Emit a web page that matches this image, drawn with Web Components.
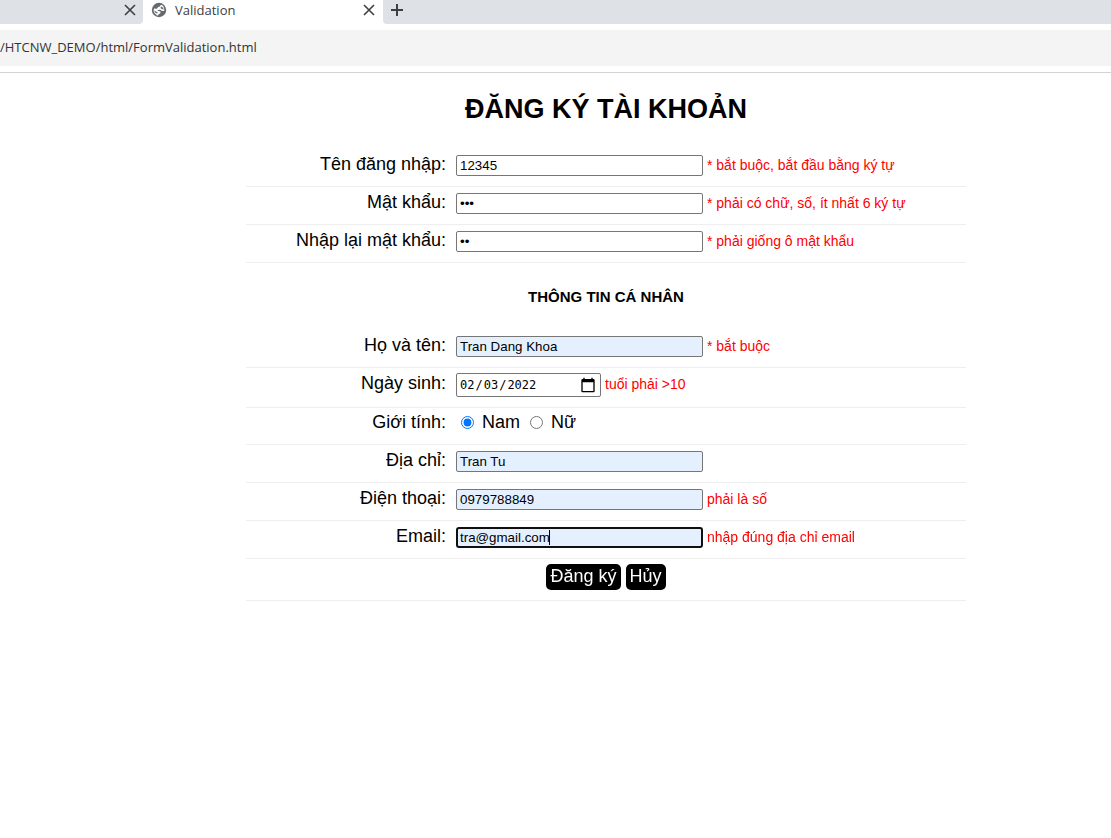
<!DOCTYPE html>
<html lang="vi">
<head>
<meta charset="utf-8">
<title>Validation</title>
<style>
  body { margin: 0; background: #fff; color: #000; font-family: "Liberation Sans", Arial, sans-serif; }
</style>
</head>
<body>
<browser-bar></browser-bar>
<signup-form>
  <h1 slot="title">ĐĂNG KÝ TÀI KHOẢN</h1>
  <form-field label="Tên đăng nhập:" value="12345">* bắt buộc, bắt đầu bằng ký tự</form-field>
  <form-field label="Mật khẩu:" type="password" value="abc">* phải có chữ, số, ít nhất 6 ký tự</form-field>
  <form-field label="Nhập lại mật khẩu:" type="password" value="ab">* phải giống ô mật khẩu</form-field>
  <section-title>THÔNG TIN CÁ NHÂN</section-title>
  <form-field label="Họ và tên:" value="Tran Dang Khoa" filled>* bắt buộc</form-field>
  <form-field label="Ngày sinh:" type="date" value="2022-02-03">tuổi phải &gt;10</form-field>
  <gender-field></gender-field>
  <form-field label="Địa chỉ:" value="Tran Tu" filled></form-field>
  <form-field label="Điện thoại:" type="tel" value="0979788849" filled>phải là số</form-field>
  <form-field label="Email:" value="tra@gmail.com" filled active>nhập đúng địa chỉ email</form-field>
  <form-actions></form-actions>
</signup-form>

<script>
  const attach = (host, html) => {
    const root = host.attachShadow({ mode: 'open' });
    root.innerHTML = html;
    return root;
  };

  customElements.define('browser-bar', class extends HTMLElement {
    connectedCallback() {
      attach(this, `
        <style>
          :host { display: block; border-bottom: 1px solid #d2d3d5; font-family: "Open Sans", "Noto Sans", sans-serif; color: #3c4043; }
          .tabs { display: flex; height: 24px; background: #fff; }
          .tab { display: flex; align-items: center; box-sizing: border-box; padding-bottom: 4px; }
          .before { width: 143px; justify-content: flex-end; padding-right: 7px; background: #dee1e6; border-bottom-right-radius: 4px; }
          .current { width: 240px; padding: 0 8px 4px; gap: 8px; font-size: 13px; }
          .current span { flex: 1; }
          .after { flex: 1; padding-left: 8px; background: #dee1e6; border-bottom-left-radius: 4px; }
          button { display: flex; border: 0; padding: 0; background: none; color: inherit; }
          svg { display: block; }
          input { display: block; box-sizing: border-box; width: 100%; height: 36px; margin: 6px 0; border: 0; padding: 0 0 2px; background: #f4f4f4; color: #333; font: 13px "Open Sans", "Noto Sans", sans-serif; outline: 0; }
        </style>
        <div class="tabs">
          <div class="tab before">
            <button aria-label="Close tab"><svg width="12" height="12" viewBox="0 0 12 12"><path d="M1 1l10 10M11 1L1 11" stroke="currentColor" stroke-width="1.6"/></svg></button>
          </div>
          <div class="tab current">
            <svg width="16" height="16" viewBox="0 0 16 16"><circle cx="8" cy="8" r="7.200" fill="#666a6e"/><path d="M10.500 2.800C9 3 9.800 4.600 8 4.800 6.400 5 6.800 6.600 5.400 6.800L3 6.600C2.200 8.600 2.800 10.600 4.200 11.800L5.800 13.200C6.600 13.600 7.400 13.500 7.600 12.600 7.800 11.500 9.600 11.800 9.600 10.200 9.600 8.800 7.800 9.200 6.400 8.400 8 8 8.600 7.600 9.400 8 10.600 8.600 11.600 9.600 13.200 8.800 13.600 6.200 12.600 4 10.500 2.800z" fill="#fff"/><path d="M3.400 8.600C4.600 9 5.200 10.200 6.800 10.400L6.200 11.600 4.800 11C3.800 10.400 3.400 9.600 3.400 8.600zM10.200 4.600L12.200 5.800 12.600 7.600 10.800 7 9.400 6z" fill="#666a6e"/></svg>
            <span>Validation</span>
            <button aria-label="Close tab"><svg width="12" height="12" viewBox="0 0 12 12"><path d="M1 1l10 10M11 1L1 11" stroke="currentColor" stroke-width="1.6"/></svg></button>
          </div>
          <div class="tab after">
            <button aria-label="New tab"><svg width="12" height="12" viewBox="0 0 12 12"><path d="M6 0v12M0 6h12" stroke="currentColor" stroke-width="2"/></svg></button>
          </div>
        </div>
        <input aria-label="Address" value="/HTCNW_DEMO/html/FormValidation.html" spellcheck="false">`);
    }
  });

  customElements.define('signup-form', class extends HTMLElement {
    connectedCallback() {
      attach(this, `
        <style>
          :host { display: block; padding-left: 101px; }
          form { max-width: 720px; margin: 0 auto; }
          ::slotted(h1) { margin: 0; padding: 20px 0 24px; font-size: 27px; line-height: 32px; text-align: center; }
        </style>
        <form><slot name="title"></slot><slot></slot></form>`);
    }
  });

  customElements.define('section-title', class extends HTMLElement {
    connectedCallback() {
      attach(this, `
        <style>
          :host { display: block; }
          h2 { margin: 0; padding: 24px 0 23px; font-size: 15px; line-height: 20px; text-align: center; }
        </style>
        <h2><slot></slot></h2>`);
    }
  });

  customElements.define('form-field', class extends HTMLElement {
    connectedCallback() {
      const type = this.getAttribute('type') || 'text';
      const root = attach(this, `
        <style>
          :host { display: flex; align-items: flex-start; border-bottom: 1px solid #eee; padding: 6px 0 10px; }
          label { width: 200px; margin-right: 10px; font-size: 18px; line-height: 18px; text-align: right; }
          input { box-sizing: border-box; width: 247px; height: 21px; margin: 0 4px 0 0; border: 1px solid #767676; border-radius: 2px; padding: 1px 3px; background: #fff; color: #000; font-family: "Liberation Sans", Arial, sans-serif; outline: 0; }
          :host([filled]) input { background: #e5f0ff; }
          :host([active]) input { border: 2px solid #101010; border-radius: 3px; padding: 0 2px; caret-color: transparent; background: linear-gradient(#000, #000) 91px 1px / 1px 15px no-repeat #e5f0ff; }
          input[type="date"] { width: 145px; height: 24px; margin-top: -1px; padding: 1px 2px; font-family: "DejaVu Sans Mono", monospace; font-size: 12px; }
          ::-webkit-calendar-picker-indicator { width: 16px; height: 16px; padding: 0; margin-right: 2px; background-size: 16px 16px; }
          output { font-size: 14px; line-height: 20px; color: #f00; }
        </style>
        <label for="control"></label>
        <input id="control">
        <output for="control"><slot></slot></output>`);
      root.querySelector('label').textContent = this.getAttribute('label');
      const input = root.querySelector('input');
      input.type = type;
      input.value = this.getAttribute('value');
      if (this.hasAttribute('active')) {
        input.focus();
        input.setSelectionRange(input.value.length, input.value.length);
      }
    }
  });

  customElements.define('gender-field', class extends HTMLElement {
    connectedCallback() {
      attach(this, `
        <style>
          :host { display: block; border-bottom: 1px solid #eee; }
          .row { display: flex; align-items: center; padding: 4px 0 12px; font-size: 18px; line-height: 20px; }
          .name { width: 200px; margin-right: 15px; text-align: right; }
          input { width: 13px; height: 13px; margin: 0 8px 0 0; }
          label { margin-right: 10px; }
        </style>
        <div class="row" role="radiogroup" aria-labelledby="name">
          <span class="name" id="name">Giới tính:</span>
          <input type="radio" name="gender" id="male" checked><label for="male">Nam</label>
          <input type="radio" name="gender" id="female"><label for="female">Nữ</label>
        </div>`);
    }
  });

  customElements.define('form-actions', class extends HTMLElement {
    connectedCallback() {
      attach(this, `
        <style>
          :host { display: flex; justify-content: center; gap: 5px; border-bottom: 1px solid #eee; padding: 5px 0 10px; }
          button { height: 26px; border: 0; border-radius: 5px; padding: 0 4px 2px; background: #000; color: #fff; font: 18px "Liberation Sans", Arial, sans-serif; }
        </style>
        <button type="submit">Đăng ký</button>
        <button type="reset">Hủy</button>`);
    }
  });
</script>
</body>
</html>
